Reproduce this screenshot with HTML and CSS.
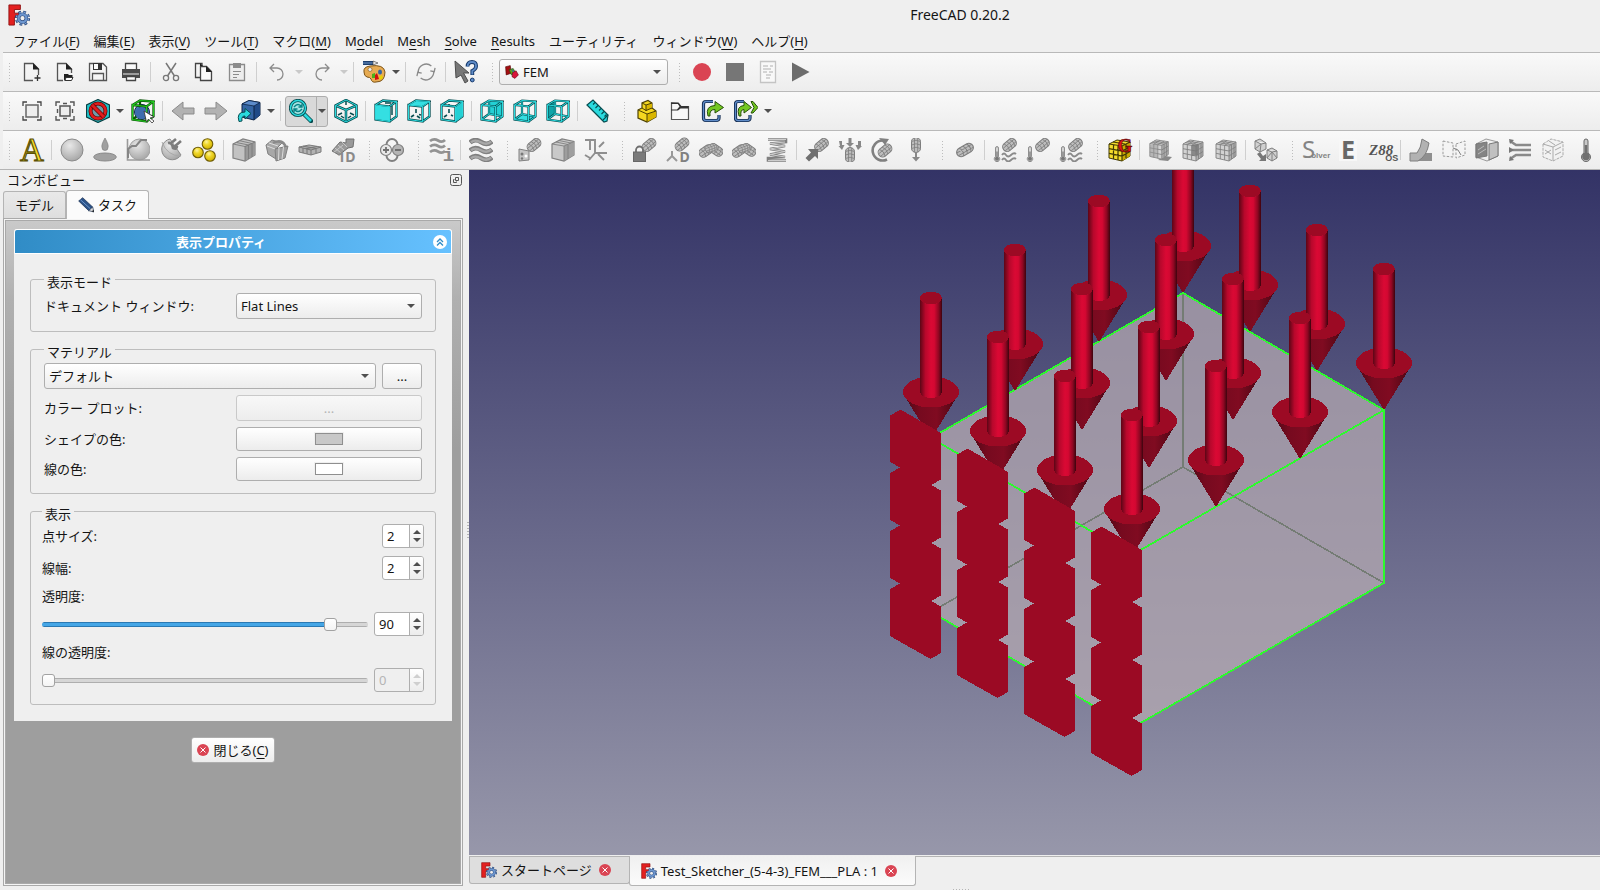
FILE: index.html
```html
<!DOCTYPE html>
<html lang="ja">
<head>
<meta charset="utf-8">
<title>FreeCAD 0.20.2</title>
<link rel="stylesheet" href="styles.css">
</head>
<body>
<svg class="sprite" aria-hidden="true">
<defs>
<radialGradient id="ball" cx=".4" cy=".3" r=".7"><stop offset="0" stop-color="#e8e8e8"/><stop offset="1" stop-color="#a8a8a8"/></radialGradient>
<radialGradient id="gold" cx=".4" cy=".3" r=".7"><stop offset="0" stop-color="#fdf29a"/><stop offset=".4" stop-color="#f0d72a"/><stop offset="1" stop-color="#d0b000"/></radialGradient>
<linearGradient id="shaft"><stop offset="0" stop-color="#5c0616"/><stop offset=".25" stop-color="#b8082c"/><stop offset=".5" stop-color="#da0934"/><stop offset=".65" stop-color="#d40832"/><stop offset=".85" stop-color="#8e0722"/><stop offset="1" stop-color="#3c040e"/></linearGradient>
<linearGradient id="cone"><stop offset="0" stop-color="#4c0714"/><stop offset=".3" stop-color="#760a1f"/><stop offset=".6" stop-color="#800b21"/><stop offset=".85" stop-color="#5c0818"/><stop offset="1" stop-color="#38050e"/></linearGradient>
<g id="pill"><path d="M-3.500-4.500H3.500A4 4.500 0 0 1 3.500 4.500H-3.500A4 4.500 0 0 1-3.500-4.500Z" fill="#bdbdbd" stroke="#7e7e7e"/><path d="M-3.500-4.500Q-1 0-3.500 4.500M0-4.500Q2.500 0 0 4.500M3.500-4.500Q6 0 3.500 4.500M-7-1.500H7M-7 1.700H7" fill="none" stroke="#7e7e7e" stroke-width=".8"/></g>
<g id="thermo"><path d="M-1.700-7A1.700 1.700 0 0 1 1.700-7V3A3.200 3.200 0 1 1-1.700 3Z" fill="#d8d8d8" stroke="#777"/><circle cy="5.500" r="2.400" fill="#777"/><path d="M0-3V5" stroke="#777" stroke-width="1.500"/></g>
<g id="mesh"><path d="M2 6 9 2 22 4V18L15 23 2 20Z" fill="#d2d2d2"/><path d="M15 8 22 4V18L15 23Z" fill="#b0b0b0"/><path d="M2 6 9 2 22 4V18L15 23 2 20ZM2 6 15 8 22 4M15 8V23M6.300 6.700V21M10.600 7.300V22M2 10.700 15 13 22 8.700M2 15.300 15 18 22 13.500M17.500 6.500V21M20 5V19.500M6.300 6.700 13 2.600M10.600 7.300 17.600 3.300M4.300 4.600 17.300 6.600M6.700 3.300 19.700 5.300" fill="none" stroke="#808080" stroke-width=".9"/></g>
<path id="edges" d="M1.500 6 15.500 7.500V22.500L1.500 20.500ZM1.500 6 9 1.500 22.500 2.500 15.500 7.500M22.500 2.500V17.500L15.500 22.500"/>
<path id="inner" d="M9 1.500V15L1.500 20.500M9 15 22.500 17.500"/>
</defs>
<symbol id="i-logo" viewBox="0 0 24 24"><path d="M1 1H13.500V6H7V10H12V14.500H7V23H1Z" fill="#e32020" stroke="#8f1010"/><circle cx="15.800" cy="15.500" r="6.300" fill="none" stroke="#2c4a7c" stroke-width="4" stroke-dasharray="2.700 2.250"/><circle cx="15.800" cy="15.500" r="6" fill="none" stroke="#7aa2d8" stroke-width="2.600" stroke-dasharray="1.900 2.810" stroke-dashoffset="-.4"/><circle cx="15.800" cy="15.500" r="4.200" fill="#efefef" stroke="#2c4a7c" stroke-width="3.800"/><circle cx="15.800" cy="15.500" r="4.300" fill="none" stroke="#6c96cf" stroke-width="2.600"/></symbol>
<symbol id="i-new" viewBox="0 0 24 24"><path d="M13 20.500H4.500V3.500H13L18.500 9V15" fill="none" stroke="#555" stroke-width="1.300"/><path d="M13 3 19.500 9.500H13Z" fill="#222"/><path d="M14.500 18H20.500M17.500 15V21" stroke="#333" stroke-width="1.300"/></symbol>
<symbol id="i-open" viewBox="0 0 24 24"><path d="M10 20.500H4.500V3.500H13L18.500 9V13" fill="none" stroke="#555" stroke-width="1.300"/><path d="M13 3 19.500 9.500H13ZM11 21V14H15L16 15H19.500V17H14Z" fill="#222"/><path d="M13 17.500H20L18.500 20.500H12Z" fill="#fff" stroke="#333"/></symbol>
<symbol id="i-save" viewBox="0 0 24 24"><path d="M3.500 3.500H17L20.500 7V20.500H3.500Z" fill="#f5f5f5" stroke="#555" stroke-width="1.300"/><path d="M7 3H16V10H7Z" fill="#333"/><path d="M8 4H12V9H8Z" fill="#fafafa"/><path d="M6.500 20V13.500H17.500V20" fill="none" stroke="#555" stroke-width="1.300"/></symbol>
<symbol id="i-print" viewBox="0 0 24 24"><path d="M6.500 9V3.500H17.500V9" fill="#fafafa" stroke="#444" stroke-width="1.300"/><path d="M3 9H21V18H3Z" fill="#4a4a4a"/><path d="M4 14H20" stroke="#eee"/><path d="M7.500 16.500H16.500V20.500H7.500Z" fill="#fafafa" stroke="#444" stroke-width="1.300"/></symbol>
<symbol id="i-cut" viewBox="0 0 24 24"><path d="M7 3 15.500 16M17 3 8.500 16" stroke="#777" stroke-width="1.500"/><circle cx="7" cy="18" r="2.600" fill="none" stroke="#777" stroke-width="1.300"/><circle cx="17" cy="18" r="2.600" fill="none" stroke="#777" stroke-width="1.300"/></symbol>
<symbol id="i-copy" viewBox="0 0 24 24"><path d="M9 17.500H3.500V3.500H10V6" fill="none" stroke="#444" stroke-width="1.300"/><path d="M8.500 6.500H14.500L19.500 11.500V20.500H8.500Z" fill="#fafafa" stroke="#444" stroke-width="1.300"/><path d="M14 6 20 12H14ZM8 3 11 6H8Z" fill="#222"/></symbol>
<symbol id="i-paste" viewBox="0 0 24 24"><path d="M4.500 4.500H19.500V20.500H4.500Z" fill="#ededed" stroke="#8b8b8b" stroke-width="1.300"/><path d="M8 3H16V8H8Z" fill="#8b8b8b"/><path d="M8 11.500H16M8 14.500H14M8 17.500H12" stroke="#8b8b8b"/></symbol>
<symbol id="i-undo" viewBox="0 0 24 24"><path d="M9 4 5 8 9 12M5 8H12A6 6 0 0 1 12 20" fill="none" stroke="#8c8c8c" stroke-width="1.300"/></symbol>
<symbol id="i-redo" viewBox="0 0 24 24"><path d="M15 4 19 8 15 12M19 8H12A6 6 0 0 0 12 20" fill="none" stroke="#8c8c8c" stroke-width="1.300"/></symbol>
<symbol id="i-palette" viewBox="0 0 24 24"><path d="M2 12Q1 7 8 6Q22 4 23 12Q23 22 14 22Q10 23 9 19Q8 17 5 17Q2 16 2 12Z" fill="#e7ab52" stroke="#7c5418"/><path d="M1 1H11V5H1Z" fill="#1d3f6e"/><path d="M1 3H11" stroke="#6d97cc"/><path d="M11 1 16 3 11 5Z" fill="#eee" stroke="#333" stroke-width=".6"/><circle cx="8" cy="9.500" r="2" fill="#eee" stroke="#7c5418" stroke-width=".6"/><ellipse cx="18" cy="12" rx="2" ry="2.600" fill="#3465a4"/><path d="M17 17 20 15 21 18 18 20Z" fill="#e8d400"/><path d="M10 14 13 13 13 18 10 18Z" fill="#4caf1a"/><path d="M13 15 15 13 17 19 13 20Z" fill="#d01010"/></symbol>
<symbol id="i-refresh" viewBox="0 0 24 24"><path d="M4.500 14A8 8 0 0 1 16 5M19.500 10A8 8 0 0 1 8 19M4 18V14H8M20 6V10H16" transform="rotate(12 12 12)" fill="none" stroke="#8a8a8a" stroke-width="1.300"/></symbol>
<symbol id="i-help" viewBox="0 0 24 24"><path d="M1 1 15 13H9.500L14 21 11 23 7 15 2 18Z" fill="#777" stroke="#4d4d4d"/><path d="M13.500 6.500Q13.500 2 18 2T22 6.500Q22 9 18.300 11V15" fill="none" stroke="#173a6c" stroke-width="3.800"/><path d="M13.700 6.500Q13.500 2 18 2T22 6.500Q22 9 18.300 11V14.500" fill="none" stroke="#5f8cc8" stroke-width="1.800"/><circle cx="18.300" cy="20" r="1.900" fill="#5f8cc8" stroke="#173a6c"/></symbol>
<symbol id="i-fem" viewBox="0 0 24 24"><path d="M1 3 9 1 11 14 2 17Z" fill="#a40f12" stroke="#4f0606"/><path d="M7 8 14 6 18 13 11 17Z" fill="#5aa31c" stroke="#25450b"/><path d="M13 13 19 10 23 17 17 23 12 20Z" fill="#d8143a" stroke="#640818"/><path d="M12 8 15 12" stroke="#3465a4" stroke-width="2"/></symbol>
<symbol id="i-macro" viewBox="0 0 24 24"><path d="M4.500 1.500H19.500V22.500H4.500Z" fill="#f8f8f8" stroke="#c4c4c4" stroke-width="1.300"/><path d="M7 6H12M14 6H17M7 9H15M7 12H11M13 12H17M10 15H15M10 18H14" stroke="#c8c8c8" stroke-width="1.400"/></symbol>
<symbol id="i-fit" viewBox="0 0 24 24"><rect x="6" y="6" width="12" height="12" fill="#eee" stroke="#666" stroke-width="1.500"/><path d="M3 7V3H7M17 3H21V7M21 17V21H17M7 21H3V17" fill="none" stroke="#444" stroke-width="1.300"/></symbol>
<symbol id="i-fitsel" viewBox="0 0 24 24"><rect x="7" y="7" width="10" height="10" fill="#eee" stroke="#555" stroke-width="1.500"/><path d="M3 7V3H7M17 3H21V7M21 17V21H17M7 21H3V17M10 4.500H14M10 19.500H14M4.500 10V14M19.500 10V14" fill="none" stroke="#555" stroke-width="1.400"/></symbol>
<symbol id="i-style" viewBox="0 0 24 24"><path d="M12 .5 23.500 6V18L12 23.500.5 18V6Z" fill="#20c4ca" stroke="#073f42" stroke-width="1.200"/><circle cx="12" cy="12" r="7.500" fill="#6f9aa8" stroke="#5e0707" stroke-width="4"/><circle cx="12" cy="12" r="7.500" fill="none" stroke="#e01c1c" stroke-width="2.600"/><path d="M6.500 6.500 17.500 17.500" stroke="#5e0707" stroke-width="4.500"/><path d="M6.300 6.300 17.700 17.700" stroke="#e01c1c" stroke-width="3"/></symbol>
<symbol id="i-bound" viewBox="0 0 24 24"><circle cx="11" cy="13" r="7.500" fill="#4a7abc" stroke="#10284a"/><g fill="none" stroke="#0a5208" stroke-width="2.300"><use href="#edges"/><use href="#inner"/></g><circle cx="10" cy="14" r="6" fill="#3e6cae"/><g fill="none" stroke="#22c81e" stroke-width="1.100"><use href="#edges"/></g><path d="M13 12 23 18 19 19 23 22 21 24 17.500 20 15.500 23Z" fill="#fff" stroke="#333" stroke-width=".8"/></symbol>
<symbol id="i-back" viewBox="0 0 24 24"><path d="M1 12 12 3V9H23V15H12V21Z" fill="#b2b2b2" stroke="#8b8b8b"/></symbol>
<symbol id="i-fwd" viewBox="0 0 24 24"><path d="M23 12 12 3V9H1V15H12V21Z" fill="#b2b2b2" stroke="#8b8b8b"/></symbol>
<symbol id="i-golink" viewBox="0 0 24 24"><path d="M5 5 12 1.500 23 3.500V16L17 21 5 18Z" fill="#3465a4" stroke="#0c2345"/><path d="M17 7 23 3.500V16L17 21Z" fill="#204a87"/><path d="M5 5 12 1.500 23 3.500 17 7Z" fill="#5c8bca" stroke="#0c2345" stroke-width=".8"/><path d="M17 7V21" stroke="#0c2345"/><path d="M2 22.500Q-1 13 8 13V9.500L14 14.500 8 20V17Q4 17 5 22Z" fill="#2adade" stroke="#064d50"/></symbol>
<symbol id="i-zoom" viewBox="0 0 24 24"><path d="M14 14 22 22" stroke="#064d50" stroke-width="4.500" stroke-linecap="round"/><path d="M14 14 22 22" stroke="#2adade" stroke-width="2.600"/><circle cx="9" cy="9" r="7.500" fill="#a5e6e6" stroke="#064d50" stroke-width="3.200"/><circle cx="9" cy="9" r="7.500" fill="none" stroke="#2adade" stroke-width="1.500"/><path d="M5 8Q9 3 13 8M13 10Q9 15 5 10M13 4.500V8H9.500M5 13.500V10H8.500" fill="none" stroke="#078487" stroke-width="1.400"/></symbol>
<symbol id="i-iso" viewBox="0 0 24 24"><g fill="none"><path d="M12 1 22.500 6.500V17.500L12 23 1.500 17.500V6.500ZM1.500 6.500 12 11 22.500 6.500M12 11V23" stroke="#064d50" stroke-width="2.500"/><path d="M12 1 22.500 6.500V17.500L12 23 1.500 17.500V6.500ZM1.500 6.500 12 11 22.500 6.500M12 11V23" stroke="#2adade"/><path d="M12 2V6M4 16 8 14M20 16 16 14M10 19 7 17M14 19 17 17" stroke="#064d50" stroke-width="1.500"/></g></symbol>
<symbol id="i-front" viewBox="0 0 24 24"><g fill="none" stroke="#064d50" stroke-width="2.300"><use href="#edges"/></g><path d="M18 7V16M11 4H17" stroke="#064d50" stroke-width="1.500"/><path d="M2 6.500 15 8V22L2 20Z" fill="#34dfe2"/><g fill="none" stroke="#2adade"><use href="#edges"/></g></symbol>
<symbol id="i-top" viewBox="0 0 24 24"><path d="M9 10V14M4 18 7 16M12 15.500 14 16M10 17 13 19" stroke="#064d50" stroke-width="1.600"/><g fill="none" stroke="#064d50" stroke-width="2.300"><use href="#edges"/></g><path d="M2.500 6 9.500 2 21.500 3 15 7Z" fill="#34dfe2"/><g fill="none" stroke="#2adade"><use href="#edges"/></g></symbol>
<symbol id="i-right" viewBox="0 0 24 24"><path d="M9 10V14M4 18 7 16M9 5V7M11 16 13 17" stroke="#064d50" stroke-width="1.600"/><g fill="none" stroke="#064d50" stroke-width="2.300"><use href="#edges"/></g><path d="M16 8 22 3.500V17.500L16 22Z" fill="#24d0d4"/><g fill="none" stroke="#2adade"><use href="#edges"/></g></symbol>
<symbol id="i-rear" viewBox="0 0 24 24"><path d="M9 2 22 3.300V18L9 15Z" fill="#24d0d4"/><g fill="none" stroke="#064d50" stroke-width="2.200"><use href="#inner"/><use href="#edges"/></g><g fill="none" stroke="#2adade"><use href="#inner"/><use href="#edges"/></g></symbol>
<symbol id="i-bottom" viewBox="0 0 24 24"><path d="M2 20 9 15 22 18 15 22Z" fill="#34dfe2"/><g fill="none" stroke="#064d50" stroke-width="2.200"><use href="#inner"/><use href="#edges"/></g><g fill="none" stroke="#2adade"><use href="#inner"/><use href="#edges"/></g></symbol>
<symbol id="i-left" viewBox="0 0 24 24"><path d="M2 6 9 2V15L2 20Z" fill="#0fa5a9"/><g fill="none" stroke="#064d50" stroke-width="2.200"><use href="#inner"/><use href="#edges"/></g><g fill="none" stroke="#2adade"><use href="#inner"/><use href="#edges"/></g></symbol>
<symbol id="i-ruler" viewBox="0 0 24 24"><path d="M1 6 7 1 22 16 21 22 18 23Z" fill="#2adade" stroke="#064d50" stroke-width="1.200"/><path d="M9 3.500 7 5.500M12 6.500 9.500 9M15 9.500 13 11.500M18 12.500 15.500 15M20.500 15.500 18.500 17.500M22 16 17 21" stroke="#064d50" stroke-width="1.100"/></symbol>
<symbol id="i-part" viewBox="0 0 24 24"><path d="M3 11 7 9V4L13 1.500 17 4V9L21 12V18L12 23 3 19Z" fill="#f4d720" stroke="#4d4103" stroke-width="1.200"/><path d="M12 15 21 12V18L12 23ZM11 6 17 4V9L11 12Z" fill="#d9b600"/><path d="M3 11 12 15 21 12M12 15V23M7 9 11 11.500 17 9M7 4 11 6V12M11 6 17 4" fill="none" stroke="#4d4103"/></symbol>
<symbol id="i-group" viewBox="0 0 24 24"><path d="M3.500 4V20.500H20.500V7.500H13L10.500 4.500Z" fill="#f8f8f8" stroke="#555" stroke-width="1.200"/><path d="M3 3.500H10.500L13 7H20.500V9.500H12.500L10 11.500H3V10.500H9L11.500 7.500 10 5H3Z" fill="#333"/></symbol>
<symbol id="i-link" viewBox="0 0 24 24"><path d="M12 2.500H5Q2.500 2.500 2.500 5V19Q2.500 21.500 5 21.500H15Q18 21.500 18 19V16" fill="none" stroke="#122b50" stroke-width="3.200"/><path d="M12 2.500H5Q2.500 2.500 2.500 5V19Q2.500 21.500 5 21.500H15Q18 21.500 18 19V16" fill="none" stroke="#5f8cc8" stroke-width="1.300"/><path d="M7 17Q4 7 14 6.500V2.500L22.500 8.500 14 14V10.500Q8 10.500 9 17Z" fill="#73c820" stroke="#27510a"/></symbol>
<symbol id="i-sublink" viewBox="0 0 24 24"><path d="M10 2.500H4Q1.500 2.500 1.500 5V19Q1.500 21.500 4 21.500H13Q16 21.500 16 19V16" fill="none" stroke="#122b50" stroke-width="3.200"/><path d="M10 2.500H4Q1.500 2.500 1.500 5V19Q1.500 21.500 4 21.500H13Q16 21.500 16 19V16" fill="none" stroke="#5f8cc8" stroke-width="1.300"/><path d="M5 17Q2 7 10 6.500V2.500L17.500 8.500 10 14V10.500Q6 10.500 7 17ZM17 2.500 19 2.500 24 8.500 19 14 17 14 20 8.500Z" fill="#73c820" stroke="#27510a"/></symbol>
<symbol id="i-sphere" viewBox="0 0 24 24"><circle cx="12" cy="12" r="11" fill="url(#ball)" stroke="#8b8b8b"/></symbol>
<symbol id="i-drop" viewBox="0 0 24 24"><path d="M12 0Q16 7 15 9.500A3 3 0 0 1 9 9.500Q8 7 12 0Z" fill="#a0a0a0" stroke="#777" stroke-width=".6"/><ellipse cx="12" cy="19" rx="11.300" ry="4" fill="#a2a2a2" stroke="#888"/></symbol>
<symbol id="i-curve" viewBox="0 0 24 24"><circle cx="13.500" cy="11.500" r="10.500" fill="url(#ball)" stroke="#a2a2a2"/><path d="M1.500 1V22H24" fill="none" stroke="#9a9a9a" stroke-width="1.600"/><path d="M2 20V11L6 8H10L15 2H21" fill="none" stroke="#858585" stroke-width="2"/></symbol>
<symbol id="i-react" viewBox="0 0 24 24"><path d="M11 1A10.500 10.500 0 1 0 22 17Z" fill="url(#ball)" stroke="#8b8b8b"/><path d="M3 4Q8 18 22 18" fill="none" stroke="#a8a8a8"/><path d="M11 6 17 1M15 9 22 3M9 5Q13 4 14 10Q18 12 18 8" fill="none" stroke="#7c7c7c" stroke-width="2.600"/></symbol>
<symbol id="i-balls" viewBox="0 0 24 24"><g fill="url(#gold)" stroke="#6e5c06" stroke-width="1.100"><circle cx="15.500" cy="6" r="5.300"/><circle cx="6" cy="14.500" r="5.300"/><circle cx="18" cy="18" r="5.300"/></g></symbol>
<symbol id="i-solid" viewBox="0 0 24 24"><path d="M1 6 11 1 23 4V17L13 23 1 20Z" fill="#c2c2c2" stroke="#808080" stroke-width="1.200"/><path d="M13 8 23 4V17L13 23Z" fill="#989898"/><path d="M1 6 13 8.500 23 4M13 8V23M16.500 7V21M20 5.500V19M4.500 4.500 16.500 7M8 2.800 20 5.500" fill="none" stroke="#7c7c7c" stroke-width=".9"/></symbol>
<symbol id="i-shell" viewBox="0 0 24 24"><path d="M1 7 7 2 17 5 12 10 11 21 3 16Z" fill="#a8a8a8" stroke="#808080"/><path d="M8 5Q17 0 21 9" fill="none" stroke="#8a8a8a" stroke-width="2.400"/><path d="M10 11 23 8 20 20 11 23Z" fill="#9e9e9e" stroke="#808080"/><path d="M14 10 13.500 22M18.500 9 17 21M2 8 10 11M4 5 13 8" fill="none" stroke="#dcdcdc"/></symbol>
<symbol id="i-beam" viewBox="0 0 24 24"><path d="M1 9 11 7 23 9V14L13 17 1 14Z" fill="#b2b2b2" stroke="#7c7c7c"/><path d="M1 9 13 12 23 9M13 12V17M5 10V15M9 11V16M18 11V15M5 8.200 18 10.500M8 10.800 19 8.500" fill="none" stroke="#777"/></symbol>
<symbol id="i-elec" viewBox="0 0 24 24"><g fill="none" stroke="#808080" stroke-width="2"><circle cx="12" cy="6.500" r="5.500"/><circle cx="12" cy="17.500" r="5.500"/></g><circle cx="6" cy="12" r="5.500" fill="#e8e8e8" stroke="#808080" stroke-width="1.200"/><circle cx="18" cy="12" r="5.500" fill="#b5b5b5" stroke="#808080" stroke-width="1.200"/><path d="M3 12H9M6 9V15M15 12H21" stroke="#707070" stroke-width="1.800"/></symbol>
<symbol id="i-flow" viewBox="0 0 24 24"><path d="M1 4.500Q6 0 12 4T23 3.500M1 12.500Q6 8 12 12T23 11.500M1 20.500Q6 16 12 20T23 19.500" fill="none" stroke="#808080" stroke-width="4.600"/><path d="M2 4.200Q6 1 12 4.300T22 3.700M2 12.200Q6 9 12 12.300T22 11.700M2 20.200Q6 17 12 20.300T22 19.700" fill="none" stroke="#a8a8a8" stroke-width="2.400"/></symbol>
<symbol id="i-force1" viewBox="0 0 24 24"><use href="#pill" transform="translate(16 7) rotate(-40)"/><path d="M1 11 11 13V22L1 23Z" fill="#c4c4c4" stroke="#808080"/><circle cx="4" cy="16" r="1.500" fill="#777"/><circle cx="8" cy="18" r="1.500" fill="#fff"/><circle cx="4" cy="20.500" r="1.200" fill="#777"/></symbol>
<symbol id="i-box" viewBox="0 0 24 24"><path d="M1 6 11 1 23 3.500V17L13 23 1 20Z" fill="#c9c9c9" stroke="#808080" stroke-width="1.200"/><path d="M13 8 23 3.500V17L13 23Z" fill="#9e9e9e"/><path d="M1 6 13 8 23 3.500M13 8V23M17 7V21M5 4 17 6.500M8 2.500 20 5" fill="none" stroke="#808080" stroke-width=".9"/></symbol>
<symbol id="i-plane" viewBox="0 0 24 24"><path d="M1 2H10M6 2V12M11 1V15L5 22M11 15H23M20 4 15 9M14 16 20 22M1 17 6 20" fill="none" stroke="#8e8e8e" stroke-width="1.900"/></symbol>
<symbol id="i-lock" viewBox="0 0 24 24"><use href="#pill" transform="translate(16 7) rotate(-40)"/><path d="M3 15V12A3.500 3.500 0 0 1 10 12V15" fill="none" stroke="#6e6e6e" stroke-width="1.800"/><rect x=".5" y="14" width="12" height="9.500" fill="#7a7a7a" stroke="#666"/></symbol>
<symbol id="i-contact" viewBox="0 0 24 24"><use href="#pill" transform="translate(7 13) rotate(-35)"/><use href="#pill" transform="translate(17 12) rotate(35)"/><use href="#pill" transform="translate(12 10) rotate(-20) scale(.8)"/></symbol>
<symbol id="i-spring" viewBox="0 0 24 24"><path d="M3 1.500H21V4L5 5.500 20 8 5 11 20 13.500 5 16.500 20 19 3 20V22.500H21" fill="none" stroke="#808080" stroke-width="2.600"/><path d="M3 1.500H21M20 4 5 5.500 20 8 5 11 20 13.500 5 16.500 20 19M3 22.500H21" fill="none" stroke="#cdcdcd" stroke-width="1.200"/></symbol>
<symbol id="i-farrow" viewBox="0 0 24 24"><use href="#pill" transform="translate(16.500 7) rotate(-40)"/><path d="M3 11H13V21L10 18 4 23.500.5 20 6 14.500Z" fill="#707070"/></symbol>
<symbol id="i-pressure" viewBox="0 0 24 24"><use href="#pill" transform="translate(12 17) rotate(-90)"/><path d="M10.500 0H13.500V5H16L12 9 8 5H10.500ZM1 3H4V7H6.500L4 12 .5 8H2ZM20 3H23V8L24 8 20 12 17.500 7H20Z" fill="#888"/></symbol>
<symbol id="i-centrif" viewBox="0 0 24 24"><use href="#pill" transform="translate(14 12.500) rotate(-40)"/><path d="M16 21.500A10 10 0 1 1 12 2.500" fill="none" stroke="#808080" stroke-width="2.600"/><path d="M8 0 18 1 14 7Z" fill="#808080"/></symbol>
<symbol id="i-weight" viewBox="0 0 24 24"><use href="#pill" transform="translate(12 7) rotate(-90)"/><path d="M11 15H13V19H16L12 23.500 8 19H11Z" fill="#888"/></symbol>
<symbol id="i-pill" viewBox="0 0 24 24"><use href="#pill" transform="translate(12 12) rotate(-30) scale(1.200 1)"/></symbol>
<symbol id="i-theat" viewBox="0 0 24 24"><use href="#pill" transform="translate(16.500 7) rotate(-40)"/><use href="#thermo" transform="translate(4 16) scale(.85)"/><path d="M9 17Q11 14 13 17T18 17T23 16M9 22Q11 19 13 22T18 22T23 21" fill="none" stroke="#8a8a8a" stroke-width="1.800"/></symbol>
<symbol id="i-ttemp" viewBox="0 0 24 24"><use href="#pill" transform="translate(16.500 7) rotate(-40)"/><use href="#thermo" transform="translate(4 16) scale(.85)"/></symbol>
<symbol id="i-mesh1" viewBox="0 0 24 24"><path d="M17 18 24 19 20 23 10 22Z" fill="#888"/><use href="#mesh" transform="scale(.92)"/><path d="M2 7H9V20L2 19Z" fill="#999" opacity=".5"/></symbol>
<symbol id="i-mesh2" viewBox="0 0 24 24"><use href="#mesh"/><path d="M11 7 17 6V17L11 18Z" fill="#777" opacity=".8"/></symbol>
<symbol id="i-mesh3" viewBox="0 0 24 24"><use href="#mesh"/></symbol>
<symbol id="i-tomesh" viewBox="0 0 24 24"><g fill="#d0d0d0" stroke="#808080"><path d="M1 3 6 1 12 5V11L6 14 1 11ZM1 3 7 6 12 5M7 6 6 14M1 11 7 6"/><path d="M13 12 18 10 23 13V20L18 23 13 20ZM13 12 18 14 23 13M18 14V23M13 20 18 14 23 20"/></g><path d="M3 16 6 14 9 18 12 16V23H5L7 21Z" fill="#777"/></symbol>
<symbol id="i-deform" viewBox="0 0 24 24"><path d="M1 23V15H8Q12 10 13 1L20 5Q18 12 15 15H23V23Z" fill="#8f8f8f"/><path d="M1 23V15H8Q12 10 13 1L20 5Q18 18 9 23Z" fill="#b2b2b2" stroke="#808080"/></symbol>
<symbol id="i-clip" viewBox="0 0 24 24"><path d="M1 3 11 5V19L1 18ZM14 6 23 3V17L14 20Z" fill="#f4f4f4" stroke="#9a9a9a" stroke-dasharray="2.500 1.500"/><path d="M11 10 16 12 19 17" fill="none" stroke="#808080"/></symbol>
<symbol id="i-cut3d" viewBox="0 0 24 24"><path d="M1 6 11 1 23 4V18L12 23 1 19Z" fill="#f0f0f0" stroke="#999"/><path d="M1 6 12 4V18L1 20Z" fill="#848484" stroke="#777"/><path d="M14 6 23 4V18L14 22Z" fill="#c0c0c0" stroke="#777"/><path d="M3 16 11 11M3 12 9 8" stroke="#bbb"/></symbol>
<symbol id="i-stream" viewBox="0 0 24 24"><path d="M2 3 8 7H23M2 12H23M2 21 8 17H23" fill="none" stroke="#8a8a8a" stroke-width="2.600"/><path d="M1 1 6 2 2 6ZM1 9 6 12 1 15ZM1 23 6 22 2 18Z" fill="#777"/></symbol>
<symbol id="i-contour" viewBox="0 0 24 24"><path d="M2 6 10 1 22 4V18L12 23 2 19Z" fill="#f2f2f2" stroke="#aaa" stroke-dasharray="3 1"/><path d="M2 6 12 9 22 4M12 9V23M4 12 10 16M4 16 10 12M14 12 20 9M14 17 20 14M8 3 14 7" fill="none" stroke="#aaa"/></symbol>
<symbol id="i-thermo" viewBox="0 0 24 24"><path d="M10 3A2 2 0 0 1 14 3V15A4.500 4.500 0 1 1 10 15Z" fill="#c8c8c8" stroke="#666"/><circle cx="12" cy="18.500" r="3.800" fill="#707070"/><path d="M12 7V18" stroke="#707070" stroke-width="2.500"/></symbol>
<symbol id="i-close" viewBox="0 0 24 24"><circle cx="12" cy="12" r="12" fill="#da4453"/><path d="M7 7 17 17M17 7 7 17" stroke="#fff" stroke-width="2"/></symbol>
<symbol id="i-pencil" viewBox="0 0 24 24"><path d="M1 6 7 1 22 15 16 20.500Z" fill="#2b5288" stroke="#14294a"/><path d="M3.500 4 19 18" stroke="#6d97cc" stroke-width="1.500"/><path d="M22 15 24 22.500 16 20.500Z" fill="#ddd" stroke="#14294a"/><path d="M24 22.500 20.500 21.500 23.300 19.500Z" fill="#111"/></symbol>
</svg>

<header class="titlebar">
  <svg class="logo" role="img" aria-label="FreeCAD"><use href="#i-logo"/></svg>
  <h1 class="title">FreeCAD 0.20.2</h1>
</header>

<nav class="menubar" aria-label="メニュー">
  <button class="menu">ファイル(<u>F</u>)</button>
  <button class="menu">編集(<u>E</u>)</button>
  <button class="menu">表示(<u>V</u>)</button>
  <button class="menu">ツール(<u>T</u>)</button>
  <button class="menu">マクロ(<u>M</u>)</button>
  <button class="menu">M<u>o</u>del</button>
  <button class="menu">M<u>e</u>sh</button>
  <button class="menu"><u>S</u>olve</button>
  <button class="menu"><u>R</u>esults</button>
  <button class="menu">ユーティリティ</button>
  <button class="menu">ウィンドウ(<u>W</u>)</button>
  <button class="menu">ヘルプ(<u>H</u>)</button>
</nav>

<div class="toolbar" role="toolbar" aria-label="ファイル">
  <span class="grip"></span>
  <button class="tool" aria-label="新規"><svg class="icon"><use href="#i-new"/></svg></button>
  <button class="tool" aria-label="開く"><svg class="icon"><use href="#i-open"/></svg></button>
  <button class="tool" aria-label="保存"><svg class="icon"><use href="#i-save"/></svg></button>
  <button class="tool" aria-label="印刷"><svg class="icon"><use href="#i-print"/></svg></button>
  <span class="sep"></span>
  <button class="tool" aria-label="切り取り"><svg class="icon"><use href="#i-cut"/></svg></button>
  <button class="tool" aria-label="コピー"><svg class="icon"><use href="#i-copy"/></svg></button>
  <button class="tool" aria-label="貼り付け"><svg class="icon"><use href="#i-paste"/></svg></button>
  <span class="sep"></span>
  <button class="tool" aria-label="元に戻す"><svg class="icon"><use href="#i-undo"/></svg></button>
  <button class="drop drop-off" aria-label="元に戻す履歴"></button>
  <button class="tool" aria-label="やり直し"><svg class="icon"><use href="#i-redo"/></svg></button>
  <button class="drop drop-off" aria-label="やり直し履歴"></button>
  <span class="sep"></span>
  <button class="tool" aria-label="外観"><svg class="icon"><use href="#i-palette"/></svg></button>
  <button class="drop" aria-label="外観メニュー"></button>
  <span class="sep"></span>
  <button class="tool" aria-label="更新"><svg class="icon"><use href="#i-refresh"/></svg></button>
  <span class="sep"></span>
  <button class="tool" aria-label="これは何"><svg class="icon"><use href="#i-help"/></svg></button>
  <span class="grip"></span>
  <span class="combo combo-bench">
    <svg class="combo-icon" aria-hidden="true"><use href="#i-fem"/></svg>
    <select aria-label="ワークベンチ"><option>FEM</option></select>
  </span>
  <span class="grip"></span>
  <button class="tool" aria-label="マクロの記録"><svg class="icon" viewBox="0 0 24 24"><circle cx="12" cy="12" r="9" fill="#da4453"/></svg></button>
  <button class="tool" aria-label="マクロの停止"><svg class="icon" viewBox="0 0 24 24"><path d="M3 3H21V21H3Z" fill="#767676"/></svg></button>
  <button class="tool" aria-label="マクロ"><svg class="icon"><use href="#i-macro"/></svg></button>
  <button class="tool" aria-label="マクロの実行"><svg class="icon" viewBox="0 0 24 24"><path d="M3 2.500 20.500 12 3 21.500Z" fill="#6c6c6c"/></svg></button>
</div>

<div class="toolbar" role="toolbar" aria-label="ビュー">
  <span class="grip"></span>
  <button class="tool" aria-label="全てにフィット"><svg class="icon"><use href="#i-fit"/></svg></button>
  <button class="tool" aria-label="選択にフィット"><svg class="icon"><use href="#i-fitsel"/></svg></button>
  <button class="tool" aria-label="描画スタイル"><svg class="icon"><use href="#i-style"/></svg></button>
  <button class="drop" aria-label="描画スタイルメニュー"></button>
  <button class="tool" aria-label="境界ボックス"><svg class="icon"><use href="#i-bound"/></svg></button>
  <span class="sep"></span>
  <button class="tool" aria-label="戻る"><svg class="icon"><use href="#i-back"/></svg></button>
  <button class="tool" aria-label="進む"><svg class="icon"><use href="#i-fwd"/></svg></button>
  <button class="tool" aria-label="リンク先へ"><svg class="icon"><use href="#i-golink"/></svg></button>
  <button class="drop" aria-label="リンクメニュー"></button>
  <span class="sep"></span>
  <span class="split">
    <button class="tool" aria-label="ビューの同期"><svg class="icon"><use href="#i-zoom"/></svg></button>
    <button class="drop" aria-label="ビューの同期メニュー"></button>
  </span>
  <button class="tool" aria-label="等角投影"><svg class="icon"><use href="#i-iso"/></svg></button>
  <span class="sep"></span>
  <button class="tool" aria-label="正面"><svg class="icon"><use href="#i-front"/></svg></button>
  <button class="tool" aria-label="上面"><svg class="icon"><use href="#i-top"/></svg></button>
  <button class="tool" aria-label="右面"><svg class="icon"><use href="#i-right"/></svg></button>
  <span class="sep"></span>
  <button class="tool" aria-label="背面"><svg class="icon"><use href="#i-rear"/></svg></button>
  <button class="tool" aria-label="底面"><svg class="icon"><use href="#i-bottom"/></svg></button>
  <button class="tool" aria-label="左面"><svg class="icon"><use href="#i-left"/></svg></button>
  <span class="sep"></span>
  <button class="tool" aria-label="距離を計測"><svg class="icon"><use href="#i-ruler"/></svg></button>
  <span class="grip"></span>
  <button class="tool" aria-label="パート"><svg class="icon"><use href="#i-part"/></svg></button>
  <button class="tool" aria-label="グループ"><svg class="icon"><use href="#i-group"/></svg></button>
  <button class="tool" aria-label="リンク"><svg class="icon"><use href="#i-link"/></svg></button>
  <button class="tool" aria-label="サブリンク"><svg class="icon"><use href="#i-sublink"/></svg></button>
  <button class="drop" aria-label="サブリンクメニュー"></button>
</div>

<div class="toolbar" role="toolbar" aria-label="FEM">
  <span class="grip"></span>
  <button class="tool" aria-label="解析コンテナ"><svg class="icon" viewBox="0 0 24 24"><text x="12" y="23" text-anchor="middle" class="glyph-serif" font-size="33" fill="#f5dc2c" stroke="#5c5106" stroke-width="1.200">A</text></svg></button>
  <span class="sep"></span>
  <button class="tool" aria-label="固体材料"><svg class="icon"><use href="#i-sphere"/></svg></button>
  <button class="tool" aria-label="流体材料"><svg class="icon"><use href="#i-drop"/></svg></button>
  <button class="tool" aria-label="非線形材料"><svg class="icon"><use href="#i-curve"/></svg></button>
  <button class="tool" aria-label="強化材料"><svg class="icon"><use href="#i-react"/></svg></button>
  <button class="tool" aria-label="材料エディター"><svg class="icon"><use href="#i-balls"/></svg></button>
  <span class="sep"></span>
  <button class="tool" aria-label="梁断面"><svg class="icon"><use href="#i-solid"/></svg></button>
  <button class="tool" aria-label="梁の回転"><svg class="icon"><use href="#i-shell"/></svg></button>
  <button class="tool" aria-label="シェル厚さ"><svg class="icon"><use href="#i-beam"/></svg></button>
  <button class="tool" aria-label="1D流体"><svg class="icon" viewBox="0 0 24 24"><path d="M1 13 9 4 15 5 15 1 23 1 22 9 17 10 8 17Z" fill="#9a9a9a" stroke="#707070"/><path d="M4 10 10 15M7 7 13 12M11 4 16 9M2 15 12 7" stroke="#c8c8c8"/><text x="15.500" y="23.500" text-anchor="middle" class="glyph" font-size="14" font-weight="bold" fill="#8a8a8a">1D</text></svg></button>
  <span class="grip"></span>
  <button class="tool" aria-label="静電ポテンシャル"><svg class="icon"><use href="#i-elec"/></svg></button>
  <span class="grip"></span>
  <button class="tool" aria-label="初期流速"><svg class="icon" viewBox="0 0 24 24"><path d="M1 3Q5 0 9 2.500T16 2M1 8.500Q5 5.500 9 8T16 7.500M1 14Q5 11 9 13.500T16 13" fill="none" stroke="#939393" stroke-width="2.800"/><text x="19.500" y="23" text-anchor="middle" class="glyph-mono" font-size="19" font-weight="bold" fill="#8a8a8a">i</text></svg></button>
  <span class="sep"></span>
  <button class="tool" aria-label="流速"><svg class="icon"><use href="#i-flow"/></svg></button>
  <span class="grip"></span>
  <button class="tool" aria-label="平面回転"><svg class="icon"><use href="#i-force1"/></svg></button>
  <button class="tool" aria-label="断面出力"><svg class="icon"><use href="#i-box"/></svg></button>
  <button class="tool" aria-label="変換"><svg class="icon"><use href="#i-plane"/></svg></button>
  <span class="grip"></span>
  <button class="tool" aria-label="固定"><svg class="icon"><use href="#i-lock"/></svg></button>
  <button class="tool" aria-label="変位"><svg class="icon" viewBox="0 0 24 24"><use href="#pill" transform="translate(16 6.500) rotate(-40)"/><path d="M6 13V18L1 23M6 18 11 23" fill="none" stroke="#999" stroke-width="2"/><text x="18.500" y="23.500" text-anchor="middle" class="glyph" font-size="14" font-weight="bold" fill="#808080">D</text></svg></button>
  <button class="tool" aria-label="接触"><svg class="icon"><use href="#i-contact"/></svg></button>
  <button class="tool" aria-label="結合"><svg class="icon"><use href="#i-contact"/></svg></button>
  <button class="tool" aria-label="ばね"><svg class="icon"><use href="#i-spring"/></svg></button>
  <span class="sep"></span>
  <button class="tool" aria-label="荷重"><svg class="icon"><use href="#i-farrow"/></svg></button>
  <button class="tool" aria-label="圧力"><svg class="icon"><use href="#i-pressure"/></svg></button>
  <button class="tool" aria-label="遠心力"><svg class="icon"><use href="#i-centrif"/></svg></button>
  <button class="tool" aria-label="自重"><svg class="icon"><use href="#i-weight"/></svg></button>
  <span class="grip"></span>
  <button class="tool" aria-label="初期温度"><svg class="icon"><use href="#i-pill"/></svg></button>
  <span class="sep"></span>
  <button class="tool" aria-label="熱流束"><svg class="icon"><use href="#i-theat"/></svg></button>
  <button class="tool" aria-label="温度"><svg class="icon"><use href="#i-ttemp"/></svg></button>
  <button class="tool" aria-label="物体熱源"><svg class="icon"><use href="#i-theat"/></svg></button>
  <span class="grip"></span>
  <button class="tool" aria-label="Gmshメッシュ"><svg class="icon" viewBox="0 0 24 24"><path d="M1 6 9 2 22 4V18L14 23 1 20Z" fill="#f5dc2c" stroke="#433a05"/><path d="M14 8 22 4V18L14 23Z" fill="#c8a800"/><path d="M1 6 14 8 22 4M14 8V23M5.500 7V21M10 7.500V22M1 10.700 14 13 22 8.700M1 15.300 14 18 22 13.500M18 6V20M5 4 17 6" fill="none" stroke="#433a05" stroke-width="1.200"/><text x="17" y="14" text-anchor="middle" class="glyph-serif" font-size="19" font-weight="bold" fill="#e01818" stroke="#5c0808" stroke-width=".7">G</text></svg></button>
  <span class="sep"></span>
  <button class="tool" aria-label="境界層"><svg class="icon"><use href="#i-mesh1"/></svg></button>
  <button class="tool" aria-label="メッシュ領域"><svg class="icon"><use href="#i-mesh2"/></svg></button>
  <button class="tool" aria-label="メッシュグループ"><svg class="icon"><use href="#i-mesh3"/></svg></button>
  <span class="sep"></span>
  <button class="tool" aria-label="メッシュ変換"><svg class="icon"><use href="#i-tomesh"/></svg></button>
  <span class="grip"></span>
  <button class="tool" aria-label="ソルバー"><svg class="icon" viewBox="0 0 24 24"><text x="-1" y="20" class="glyph-sans" font-size="26" fill="#848484"><tspan font-size="24" class="glyph">S</tspan><tspan font-size="8" dx="-4" font-weight="bold">olver</tspan></text></svg></button>
  <button class="tool" aria-label="Elmer"><svg class="icon" viewBox="0 0 24 24"><rect x="3" y="1" width="18" height="22" fill="#f7f7f7"/><text x="12" y="21" text-anchor="middle" class="glyph" font-size="25" font-weight="bold" fill="#686868">E</text></svg></button>
  <button class="tool" aria-label="Z88OS"><svg class="icon" viewBox="0 0 24 24"><text x="0" y="17" class="glyph-serif" font-size="15" font-weight="bold" font-style="italic" fill="#555">Z88<tspan font-size="9" dx="-8" dy="6" font-style="normal" class="glyph-sans">OS</tspan></text></svg></button>
  <span class="sep"></span>
  <button class="tool" aria-label="ワープ"><svg class="icon"><use href="#i-deform"/></svg></button>
  <button class="tool" aria-label="スカラークリップ"><svg class="icon"><use href="#i-clip"/></svg></button>
  <button class="tool" aria-label="断面"><svg class="icon"><use href="#i-cut3d"/></svg></button>
  <button class="tool" aria-label="流線"><svg class="icon"><use href="#i-stream"/></svg></button>
  <button class="tool" aria-label="領域クリップ"><svg class="icon"><use href="#i-contour"/></svg></button>
  <button class="tool" aria-label="線形化応力"><svg class="icon"><use href="#i-thermo"/></svg></button>
</div>

<main class="workspace">
  <aside class="dock">
    <div class="dock-title"><span>コンボビュー</span>
      <button class="float" aria-label="切り離す"><svg viewBox="0 0 12 12"><rect x=".5" y=".5" width="11" height="11" rx="2" fill="none" stroke="#555"/><path d="M5.500 3.500H8.500V6.500H5.500ZM4.500 5.500H3.500V8.500H6.500V7.500" fill="none" stroke="#555"/></svg></button>
    </div>
    <div class="tabs" role="tablist">
      <button class="tab" role="tab">モデル</button>
      <button class="tab tab-on" role="tab" aria-selected="true"><svg class="tab-icon" aria-hidden="true"><use href="#i-pencil"/></svg>タスク</button>
    </div>
    <div class="pane">
      <section class="card">
        <header class="card-head"><h2>表示プロパティ</h2>
          <button class="fold" aria-label="折りたたむ"><svg viewBox="0 0 14 14"><circle cx="7" cy="7" r="7" fill="#fff"/><path d="M4 7 7 4 10 7M4 10.500 7 7.500 10 10.500" fill="none" stroke="#308cc6" stroke-width="1.300"/></svg></button>
        </header>
        <div class="card-body">
          <fieldset>
            <legend>表示モード</legend>
            <div class="row"><label for="mode">ドキュメント ウィンドウ:</label><span class="combo field"><select id="mode"><option>Flat Lines</option></select></span></div>
          </fieldset>
          <fieldset>
            <legend>マテリアル</legend>
            <div class="row"><span class="combo grow"><select aria-label="マテリアル"><option>デフォルト</option></select></span><button class="push more">...</button></div>
            <div class="row"><label for="plot">カラー プロット:</label><button class="push field" id="plot" disabled>...</button></div>
            <div class="row"><label for="shape">シェイプの色:</label><button class="push field low" id="shape" aria-label="シェイプの色"><span class="swatch swatch-gray"></span></button></div>
            <div class="row"><label for="line">線の色:</label><button class="push field low" id="line" aria-label="線の色"><span class="swatch"></span></button></div>
          </fieldset>
          <fieldset class="display">
            <legend>表示</legend>
            <div class="row"><label for="pt">点サイズ:</label><span class="spin"><input id="pt" type="number" value="2"><span class="steps"><button aria-label="増やす"></button><button aria-label="減らす"></button></span></span></div>
            <div class="row second"><label for="lw">線幅:</label><span class="spin"><input id="lw" type="number" value="2"><span class="steps"><button aria-label="増やす"></button><button aria-label="減らす"></button></span></span></div>
            <div class="row"><label for="tr">透明度:</label></div>
            <div class="row"><input class="slider slider-on" id="tr" type="range" min="0" max="100" value="90"><span class="spin wide"><input type="number" value="90" aria-label="透明度"><span class="steps"><button aria-label="増やす"></button><button aria-label="減らす"></button></span></span></div>
            <div class="row"><label for="lt">線の透明度:</label></div>
            <div class="row"><input class="slider" id="lt" type="range" min="0" max="100" value="0"><span class="spin wide spin-off"><input type="number" value="0" aria-label="線の透明度" disabled><span class="steps"><button aria-label="増やす" disabled></button><button aria-label="減らす" disabled></button></span></span></div>
          </fieldset>
        </div>
      </section>
      <button class="push close"><svg class="dot" aria-hidden="true"><use href="#i-close"/></svg><span>閉じる(<u>C</u>)</span></button>
    </div>
  </aside>
  <div class="splitter"></div>
  <section class="document">
    <svg class="view" viewBox="469 170 1131 685" preserveAspectRatio="xMidYMin slice" shape-rendering="crispEdges" role="img" aria-label="3Dビュー">
      <defs>
        <g id="arrow">
          <path d="M-28 94A28 15.500 0 0 0 28 94L24 102 0 141-24 102Z" fill="url(#cone)"/>
          <ellipse cy="94" rx="28" ry="15.500" fill="#9c0a24"/>
          <path d="M-11 0V94A11 6 0 0 0 11 94V0Z" fill="url(#shaft)"/>
          <ellipse rx="11" ry="6.300" fill="#9c0a24"/>
        </g>
        <path id="plates" d="M900.500 409.500 890 415.500V462L900 467.500 890 473V520L900 525.500 890 531V578L900 583.500 890 589V636L930.500 659 941 653V606.500L931 601 941 595.500V548.500L931 543 941 537.500V490.500L931 485 941 479.500V433Z" fill="#9b0a24"/>
      </defs>
      <path d="M931 438 1183 293 1384 410V583L1132 728 931 612Z" fill="#b4aab2" fill-opacity=".75"/>
      <path d="M1183 293V467L1384 583M1183 467 931 612" fill="none" stroke="#747c74" stroke-width="1.600"/>
      <path d="M931 438 1183 293 1384 410 1132 555ZM931 438V612L1132 728V555M1132 728 1384 583V410" fill="none" stroke="#2cfb2c" stroke-width="1.800"/>
      <use href="#arrow" x="1183" y="152"/><use href="#arrow" x="1250" y="191"/>
      <use href="#arrow" x="1099" y="201"/><use href="#arrow" x="1317" y="230"/>
      <use href="#arrow" x="1166" y="240"/><use href="#arrow" x="1015" y="250"/>
      <use href="#arrow" x="1384" y="269"/><use href="#arrow" x="1233" y="279"/>
      <use href="#arrow" x="1082" y="289"/><use href="#arrow" x="931" y="298"/>
      <use href="#arrow" x="1300" y="318"/><use href="#arrow" x="1149" y="327"/>
      <use href="#arrow" x="998" y="337"/><use href="#arrow" x="1216" y="366"/>
      <use href="#arrow" x="1065" y="376"/><use href="#arrow" x="1132" y="415"/>
      <use href="#plates"/><use href="#plates" x="67" y="39"/><use href="#plates" x="134" y="78"/><use href="#plates" x="201" y="117"/>
    </svg>
    <div class="doc-tabs" role="tablist">
      <div class="doc-tab"><svg class="doc-icon" aria-hidden="true"><use href="#i-logo"/></svg><button role="tab">スタートページ</button><button class="x" aria-label="閉じる"><svg class="dot"><use href="#i-close"/></svg></button></div>
      <div class="doc-tab doc-on"><svg class="doc-icon" aria-hidden="true"><use href="#i-logo"/></svg><button role="tab" aria-selected="true">Test_Sketcher_(5-4-3)_FEM___PLA : 1</button><button class="x" aria-label="閉じる"><svg class="dot"><use href="#i-close"/></svg></button></div>
    </div>
    <div class="handle"></div>
  </section>
</main>
</body>
</html>
```
FILE: styles.css
```css
* { box-sizing: border-box; }
body {
  margin: 0;
  height: 100vh;
  display: flex;
  flex-direction: column;
  overflow: hidden;
  background: #efefef;
  color: #141414;
  font: 13px/20px "Noto Sans", "Noto Sans CJK JP", sans-serif;
}
button, input, select { font: inherit; color: inherit; }
button { border: 0; padding: 0; background: none; }
u { text-underline-offset: 3px; }
.sprite { position: absolute; width: 0; height: 0; }
.glyph { font-family: "Noto Sans", sans-serif; }
.glyph-sans { font-family: "Liberation Sans", sans-serif; }
.glyph-serif { font-family: "Liberation Serif", serif; }
.glyph-mono { font-family: "Liberation Mono", monospace; }

.titlebar { display: grid; grid-template-columns: 1fr auto 1fr; align-items: center; height: 30px; padding: 0 8px; }
.logo { width: 22px; height: 22px; }
.title { margin: 0; padding-left: 320px; font-size: 14px; font-weight: 400; }
.menubar { display: flex; height: 22px; padding-left: 6px; }
.menu { padding: 0 7px; white-space: nowrap; }

.toolbar {
  display: flex;
  flex: none;
  align-items: center;
  height: 39px;
  margin-left: 3px;
  overflow: hidden;
  border-top: 1px solid #b9b9b9;
  background: linear-gradient(#f9f9f9, #ededed);
}
.tool { display: flex; flex: none; align-items: center; justify-content: center; width: 33px; height: 32px; }
.icon { width: 24px; height: 24px; overflow: visible; }
.grip {
  flex: none;
  width: 10px;
  height: 20px;
  margin-left: 6px;
  background: radial-gradient(circle, #bdbdbd 1px, transparent 1px) 3px 0 / 3px 3px repeat;
  border-left: 3px solid transparent;
  border-right: 3px solid transparent;
  background-clip: padding-box;
}
.grip:first-child { margin-left: 2px; }
.sep { flex: none; width: 1px; height: 20px; margin: 0 3px; background: #cfcfcf; }
.drop { display: flex; flex: none; align-items: center; justify-content: center; width: 12px; height: 32px; }
.drop::before, .combo::after { content: ""; border: 4px solid transparent; border-top-color: #4f4f4f; border-bottom: 0; }
.drop-off::before { border-top-color: #c9c9c9; }
.split { display: flex; flex: none; margin: 0 1px; border: 1px solid #adadad; border-radius: 3px; background: #d9d9d9; }
.split .tool { width: 30px; height: 29px; }
.split .drop { width: 11px; height: 29px; border-left: 1px solid #adadad; }

.combo { position: relative; display: flex; }
.combo::after { position: absolute; right: 7px; top: 11px; pointer-events: none; }
.combo select {
  appearance: none;
  width: 100%;
  height: 26px;
  padding: 0 20px 0 4px;
  border: 1px solid #aeaeae;
  border-radius: 3px;
  background: linear-gradient(#fff, #ececec);
}
.combo-bench { flex: none; width: 169px; margin: 0 1px; }
.combo-bench select { padding-left: 23px; }
.combo-icon { position: absolute; left: 6px; top: 6px; width: 14px; height: 14px; }

.workspace { display: flex; flex: 1; min-height: 0; border-top: 1px solid #b4b4b4; }
.dock { display: flex; flex: none; flex-direction: column; width: 460px; margin: 0 0 4px 3px; }
.dock-title { display: flex; align-items: center; justify-content: space-between; height: 20px; padding: 0 1px 0 4px; }
.float { width: 12px; height: 12px; }
.float svg, .fold svg { display: block; width: 100%; height: 100%; }
.tabs { display: flex; align-items: flex-end; }
.tab {
  display: flex;
  align-items: center;
  height: 27px;
  padding: 0 11px;
  border: 1px solid #b4b4b4;
  border-bottom: 0;
  border-radius: 3px 3px 0 0;
  background: linear-gradient(#e9e9e9, #dedede);
}
.tab-on { position: relative; gap: 4px; height: 29px; margin-bottom: -1px; background: #fbfbfb; }
.tab-icon { width: 16px; height: 16px; }
.pane {
  display: flex;
  flex: 1;
  flex-direction: column;
  align-items: center;
  gap: 14px;
  padding: 8px;
  border: 1px solid #a9a9a9;
  outline: 1px solid #a9a9a9;
  outline-offset: -3px;
  box-shadow: inset 0 0 0 1px #f4f4f4;
  background: linear-gradient(#cacaca, #b0b0b0 80px, #9e9e9e 230px);
}
.card { align-self: stretch; margin: 2px; background: #efefef; border-radius: 3px 3px 0 0; }
.card-head {
  display: flex;
  align-items: center;
  height: 25px;
  padding: 0 4px;
  border: 1px solid #fff;
  border-radius: 3px 3px 0 0;
  background: linear-gradient(90deg, #308cc6, #66c1ff);
}
.card-head h2 { flex: 1; margin: 0; padding-right: 10px; color: #fff; font-size: 13px; font-weight: 700; text-align: center; }
.fold { width: 14px; height: 14px; }
.card-body { display: flex; flex-direction: column; gap: 5px; padding: 13px 16px 16px; }
fieldset {
  display: flex;
  flex-direction: column;
  gap: 6px;
  margin: 0;
  min-width: 0;
  padding: 1px 13px 12px;
  border: 1px solid #bdbdbd;
  border-radius: 3px;
}
legend { margin: 0; padding: 5px 3px 0; line-height: 20px; }
.row { display: flex; align-items: center; justify-content: space-between; gap: 6px; }
.field { width: 186px; }
.grow { flex: 1; }
.push { height: 26px; border: 1px solid #aeaeae; border-radius: 3px; background: linear-gradient(#fff, #ececec); }
.push:disabled { color: #b5b5b5; border-color: #c9c9c9; background: linear-gradient(#f8f8f8, #ededed); }
.more { width: 40px; }
.low { display: flex; align-items: center; justify-content: center; height: 24px; }
.swatch { width: 28px; height: 12px; border: 1px solid #8f8f8f; outline: 1px solid #efefef; background: #fff; }
.swatch-gray { background: #c8c8c8; }
.display { padding: 0 11px 12px; }
.second { margin-top: 2px; }
.spin { display: flex; width: 42px; height: 24px; border: 1px solid #aeaeae; border-radius: 3px; background: #fff; overflow: hidden; }
.wide { width: 50px; }
.spin input { flex: 1; min-width: 0; padding: 0 0 0 4px; border: 0; background: none; appearance: textfield; }
.spin input::-webkit-inner-spin-button { appearance: none; margin: 0; }
.steps { display: flex; flex-direction: column; justify-content: space-evenly; width: 14px; border-left: 1px solid #aeaeae; background: linear-gradient(#fff, #ececec); }
.steps button { align-self: center; width: 0; height: 0; border: 4px solid transparent; border-top: 0; border-bottom-color: #4f4f4f; }
.steps button + button { border-top: 4px solid #4f4f4f; border-bottom: 0; }
.spin-off { color: #b5b5b5; background: #efefef; }
.spin-off .steps button { border-bottom-color: #cfcfcf; }
.spin-off .steps button + button { border-top-color: #cfcfcf; }
.slider { appearance: none; flex: 1; height: 14px; margin: 0; background: none; }
.slider::-webkit-slider-runnable-track {
  height: 5px;
  border-radius: 3px;
  background: linear-gradient(#aeaeae 1px, #d6d6d6 1px 4px, #aeaeae 4px);
}
.slider-on::-webkit-slider-runnable-track {
  background:
    linear-gradient(#2a79b3 1px, #45a6e6 1px 4px, #2a79b3 4px) 0 0 / 88% 100% no-repeat,
    linear-gradient(#aeaeae 1px, #d6d6d6 1px 4px, #aeaeae 4px);
}
.slider::-webkit-slider-thumb {
  appearance: none;
  width: 13px;
  height: 13px;
  margin-top: -4px;
  border: 1px solid #a2a2a2;
  border-radius: 3px;
  background: linear-gradient(#fff, #f4f4f4);
}
.dot { display: block; flex: none; width: 12px; height: 12px; }
.close { display: flex; align-items: center; gap: 4px; padding: 0 5px; }

.splitter {
  align-self: center;
  flex: none;
  width: 6px;
  height: 18px;
  background: radial-gradient(circle, #b5b5b5 1px, transparent 1px) 2px 0 / 6px 3px;
}
.document { display: flex; flex: 1; flex-direction: column; min-width: 0; }
.view { display: block; flex: 1; width: 100%; min-height: 0; background: linear-gradient(#333366, #9797aa); }
.doc-tabs { display: flex; align-items: flex-start; margin-top: 1px; border-top: 1px solid #b4b4b4; }
.doc-tab {
  display: flex;
  align-items: center;
  gap: 4px;
  height: 27px;
  padding: 0 18px 0 11px;
  border: 1px solid #b4b4b4;
  border-top: 0;
  border-radius: 0 0 3px 3px;
  background: #dedede;
}
.doc-on { height: 30px; margin-top: -1px; margin-left: -1px; background: linear-gradient(#f0f0f0, #fbfbfb); }
.doc-icon { width: 16px; height: 16px; }
.x { margin-left: 3px; }
.handle { align-self: flex-start; width: 18px; height: 4px; margin-left: 483px; background: radial-gradient(circle, #b5b5b5 1px, transparent 1px) 0 2px / 3px 4px repeat-x; }
```
